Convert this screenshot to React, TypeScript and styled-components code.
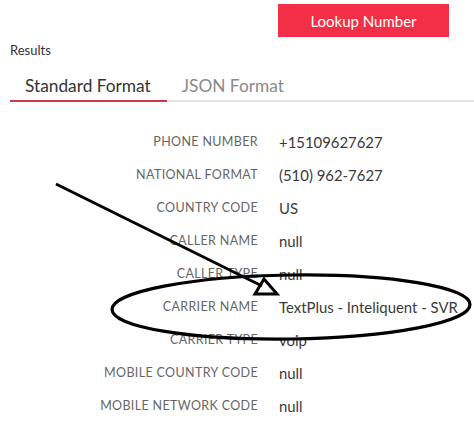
import React from "react";
import styled, { createGlobalStyle } from "styled-components";

const GlobalStyle = createGlobalStyle`
  html, body {
    margin: 0;
    padding: 0;
    background: #ffffff;
  }
  body {
    font-family: Lato, "Open Sans", "Liberation Sans", sans-serif;
    color: #333;
  }
`;

const Page = styled.div`
  position: relative;
  width: 474px;
  height: 440px;
  overflow: hidden;
  background: #fff;
`;

const Toolbar = styled.div`
  display: flex;
  justify-content: flex-end;
  padding: 4px 25px 0 0;
`;

const LookupButton = styled.button`
  width: 171px;
  height: 33px;
  border: none;
  border-radius: 0;
  background: #f22f46;
  color: #fff;
  font-family: Lato, "Open Sans", sans-serif;
  font-size: 15px;
  cursor: pointer;
`;

const Caption = styled.div`
  margin: 5px 0 0 10px;
  height: 16px;
  line-height: 16px;
  font-size: 13px;
  color: #333;
`;

const TabBar = styled.div`
  display: flex;
  margin-left: 10px;
  border-bottom: 2px solid #e3e3e3;
`;

const Tab = styled.div<{ $active?: boolean }>`
  padding: 17px 16px 3px 15px;
  line-height: 22px;
  font-size: 17.3px;
  color: ${(p) => (p.$active ? "#333" : "#8a8a8a")};
  border-bottom: 2px solid ${(p) => (p.$active ? "#c93a50" : "transparent")};
  margin-bottom: -2px;
`;

const Table = styled.div`
  margin-top: 23px;
  display: grid;
  grid-template-columns: 258px 1fr;
  column-gap: 21px;
`;

const Label = styled.div`
  height: 33px;
  line-height: 33px;
  text-align: right;
  font-size: 12.5px;
  letter-spacing: 0.35px;
  text-transform: uppercase;
  color: #666;
`;

const Value = styled.div`
  height: 33px;
  line-height: 34px;
  font-size: 14.9px;
  color: #3a3a3a;
`;

const Overlay = styled.svg`
  position: absolute;
  left: 0;
  top: 0;
  pointer-events: none;
`;

const rows: [string, string][] = [
  ["Phone Number", "+15109627627"],
  ["National Format", "(510) 962-7627"],
  ["Country Code", "US"],
  ["Caller Name", "null"],
  ["Caller Type", "null"],
  ["Carrier Name", "TextPlus - Inteliquent - SVR"],
  ["Carrier Type", "voip"],
  ["Mobile Country Code", "null"],
  ["Mobile Network Code", "null"],
];

export default function App() {
  return (
    <Page>
      <GlobalStyle />
      <Toolbar>
        <LookupButton>Lookup Number</LookupButton>
      </Toolbar>
      <Caption>Results</Caption>
      <TabBar>
        <Tab $active>Standard Format</Tab>
        <Tab>JSON Format</Tab>
      </TabBar>
      <Table>
        {rows.map(([label, value]) => (
          <React.Fragment key={label}>
            <Label>{label}</Label>
            <Value>{value}</Value>
          </React.Fragment>
        ))}
      </Table>
      <Overlay width="474" height="440" viewBox="0 0 474 440">
        <line x1="56" y1="184" x2="262" y2="286" stroke="#000" strokeWidth="3" />
        <polygon points="264,279 255,294 277,294" fill="none" stroke="#000" strokeWidth="3" strokeLinejoin="miter" />
        <ellipse cx="291" cy="307" rx="179" ry="32" fill="none" stroke="#000" strokeWidth="3.2" transform="rotate(-0.8 291 307)" />
      </Overlay>
    </Page>
  );
}
